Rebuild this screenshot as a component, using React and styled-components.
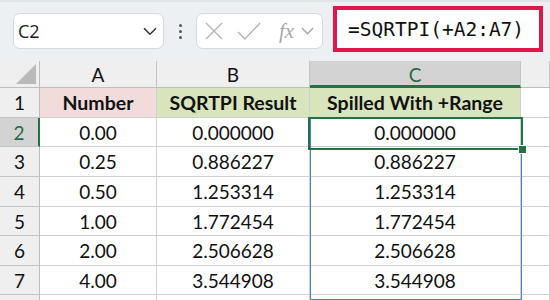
import React from "react";
import styled, { createGlobalStyle } from "styled-components";

const GlobalStyle = createGlobalStyle`
  body {
    margin: 0;
    background: #ffffff;
    overflow: hidden;
  }
`;

const Page = styled.div`
  width: 550px;
  height: 300px;
  overflow: hidden;
  font-family: Lato, "Open Sans", sans-serif;
`;

const Toolbar = styled.div`
  height: 61px;
  box-sizing: border-box;
  background: #edf0f3;
  border-top: 2px solid #e2e5e8;
  display: flex;
  align-items: flex-start;
  padding: 11px 0 0 13px;
`;

const Box = styled.div`
  height: 36px;
  box-sizing: border-box;
  background: #ffffff;
  border: 1px solid #d6d9dd;
  border-radius: 7px;
  display: flex;
  align-items: center;
`;

const NameBox = styled(Box)`
  width: 151px;
  padding: 0 6px 0 4px;
  justify-content: space-between;
  font-family: "Open Sans", "Noto Sans", sans-serif;
  font-size: 18px;
  color: #1a1a1a;
`;

const Dots = styled.div`
  width: 32px;
  height: 36px;
  display: flex;
  flex-direction: column;
  align-items: center;
  justify-content: center;
  gap: 3px;
  span {
    width: 3px;
    height: 3px;
    border-radius: 50%;
    background: #555;
  }
`;

const FxBox = styled(Box)`
  width: 127px;
  padding-left: 8px;
  gap: 14px;
`;

const FxLabel = styled.span`
  font-family: "Liberation Serif", serif;
  font-style: italic;
  font-size: 21px;
  color: #a8a8a8;
  margin-left: 4px;
  display: flex;
  align-items: center;
  gap: 7px;
`;

const FormulaBox = styled.div`
  margin: -7px 0 0 10px;
  width: 210px;
  height: 46px;
  box-sizing: border-box;
  border: 4px solid #e0174a;
  background: #ffffff;
  display: flex;
  align-items: center;
  padding-left: 11px;
  font-family: "DejaVu Sans Mono", "Liberation Mono", monospace;
  font-size: 19.5px;
  color: #111;
  white-space: nowrap;
`;

const SheetWrap = styled.div`
  position: relative;
`;

const Grid = styled.div`
  display: grid;
  grid-template-columns: 40px 117px 153px 211px 1fr;
  grid-template-rows: 27px 30px 29px 30px 30px 29px 30px 29px 30px;
`;

const Cell = styled.div`
  box-sizing: border-box;
  border-right: 1px solid #d0d0d0;
  border-bottom: 1px solid #d0d0d0;
  display: flex;
  align-items: center;
  justify-content: center;
  font-size: ${(p) => (p.$bold ? "19.5px" : "19px")};
  color: #111;
  background: ${(p) => p.$fill || "#ffffff"};
  font-weight: ${(p) => (p.$bold ? 700 : 400)};
  white-space: nowrap;
`;

const ColHead = styled(Cell)`
  background: ${(p) => (p.$active ? "#d3d3d3" : "#efefef")};
  color: ${(p) => (p.$active ? "#1e6b41" : "#111")};
  border-right: 1px solid #c4c4c4;
  border-bottom: ${(p) => (p.$active ? "3px solid #217346" : "1px solid #bdbdbd")};
  padding-top: ${(p) => (p.$active ? "2px" : "0")};
`;

const RowHead = styled(Cell)`
  background: ${(p) => (p.$active ? "#d3d3d3" : "#efefef")};
  color: ${(p) => (p.$active ? "#1e6b41" : "#111")};
  border-right: ${(p) => (p.$active ? "2px solid #217346" : "1px solid #bdbdbd")};
  border-bottom: 1px solid #c4c4c4;
`;

const Corner = styled(ColHead)`
  position: relative;
  border-right: 1px solid #bdbdbd;
  svg {
    position: absolute;
    right: 3px;
    bottom: 3px;
  }
`;

const SpillFrame = styled.div`
  position: absolute;
  left: 310px;
  top: 57px;
  width: 212px;
  height: 182px;
  box-sizing: border-box;
  border: 1.5px solid #4a7fc9;
  pointer-events: none;
`;

const ActiveFrame = styled.div`
  position: absolute;
  left: 308px;
  top: 56px;
  width: 215px;
  height: 33px;
  box-sizing: border-box;
  border: 2.5px solid #217346;
  pointer-events: none;
`;

const Handle = styled.div`
  position: absolute;
  right: -6px;
  bottom: -6px;
  width: 7px;
  height: 7px;
  background: #217346;
  border: 1px solid #ffffff;
`;

const Chevron = ({ color = "#444", size = 14 }) => (
  <svg width={size} height={size * 0.6} viewBox="0 0 14 8">
    <path d="M1 1l6 6 6-6" fill="none" stroke={color} strokeWidth="1.5" />
  </svg>
);

const rows = [
  ["0.00", "0.000000", "0.000000"],
  ["0.25", "0.886227", "0.886227"],
  ["0.50", "1.253314", "1.253314"],
  ["1.00", "1.772454", "1.772454"],
  ["2.00", "2.506628", "2.506628"],
  ["4.00", "3.544908", "3.544908"],
];

export default function App() {
  return (
    <Page>
      <GlobalStyle />
      <Toolbar>
        <NameBox>
          <span>C2</span>
          <Chevron color="#333" size={14} />
        </NameBox>
        <Dots>
          <span />
          <span />
          <span />
        </Dots>
        <FxBox>
          <svg width="18" height="18" viewBox="0 0 18 18">
            <path d="M1 1l16 16M17 1L1 17" stroke="#b4b4b4" strokeWidth="1.4" fill="none" />
          </svg>
          <svg width="24" height="18" viewBox="0 0 24 18">
            <path d="M1 10l7 7L23 1" stroke="#b4b4b4" strokeWidth="1.4" fill="none" />
          </svg>
          <FxLabel>
            fx
            <Chevron color="#a8a8a8" size={13} />
          </FxLabel>
        </FxBox>
        <FormulaBox>=SQRTPI(+A2:A7)</FormulaBox>
      </Toolbar>
      <SheetWrap>
        <Grid>
          <Corner>
            <svg width="20" height="20" viewBox="0 0 20 20">
              <path d="M20 0V20H0Z" fill="#b9b9b9" />
            </svg>
          </Corner>
          <ColHead>A</ColHead>
          <ColHead>B</ColHead>
          <ColHead $active>C</ColHead>
          <ColHead />

          <RowHead>1</RowHead>
          <Cell $bold $fill="#f2dcdb">Number</Cell>
          <Cell $bold $fill="#d8e4bc">SQRTPI Result</Cell>
          <Cell $bold $fill="#d8e4bc">Spilled With +Range</Cell>
          <Cell />

          {rows.map((r, i) => (
            <React.Fragment key={i}>
              <RowHead $active={i === 0}>{i + 2}</RowHead>
              <Cell>{r[0]}</Cell>
              <Cell>{r[1]}</Cell>
              <Cell>{r[2]}</Cell>
              <Cell />
            </React.Fragment>
          ))}
          <RowHead />
          <Cell />
          <Cell />
          <Cell />
          <Cell />
        </Grid>
        <SpillFrame />
        <ActiveFrame>
          <Handle />
        </ActiveFrame>
      </SheetWrap>
    </Page>
  );
}
